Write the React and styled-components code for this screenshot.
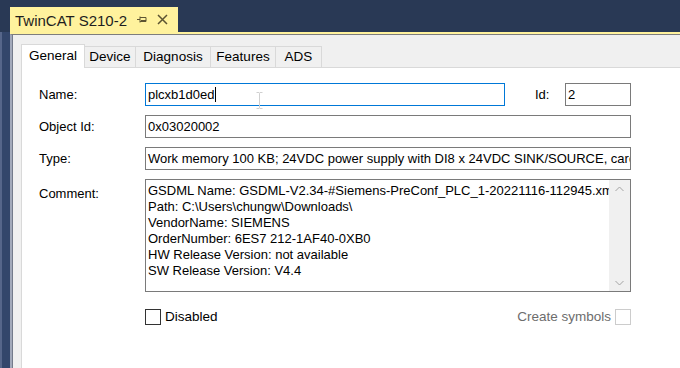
import React from "react";
import styled, { createGlobalStyle } from "styled-components";

const GlobalStyle = createGlobalStyle`
  html, body { margin: 0; padding: 0; }
  body {
    background: #293955;
    font-family: "Liberation Sans", Arial, sans-serif;
    font-size: 13px;
    color: #000;
  }
  * { box-sizing: border-box; }
`;

const Root = styled.div`
  width: 680px;
  height: 368px;
  overflow: hidden;
  display: flex;
  background: #293955;
`;

const LeftRail = styled.div`
  flex: none;
  width: 10px;
  background: linear-gradient(to right, #56668a 0 2px, #33466b 2px 10px);
  margin-top: 32px;
`;

const Main = styled.div`
  flex: 1;
  display: flex;
  flex-direction: column;
  min-width: 0;
`;

const DocTabRow = styled.div`
  height: 32px;
  flex: none;
  display: flex;
  align-items: flex-end;
`;

const DocTab = styled.div`
  width: 168px;
  height: 25px;
  background: #fff29d;
  display: flex;
  align-items: center;
  padding-left: 5px;
  color: #1e1e1e;
  font-size: 15px;
`;

const DocTitle = styled.span`
  flex: 1;
  white-space: nowrap;
  padding-top: 1px;
`;

const IconBtn = styled.span`
  width: 20px;
  height: 16px;
  display: flex;
  align-items: center;
  justify-content: center;
  margin-right: ${(p) => p.$mr ?? 0}px;
`;

const YellowLine = styled.div`
  height: 2px;
  flex: none;
  background: #fff29d;
`;

const DocBody = styled.div`
  flex: 1;
  display: flex;
  flex-direction: column;
  background: #f0f0f0;
  border-top: 1px solid #7d7d7d;
  border-left: 2px solid #a3aabb;
  box-shadow: inset 1px 0 0 #747b8b;
  padding: 9px 0 0 9px;
`;

const TabStrip = styled.div`
  display: flex;
  align-items: flex-end;
  height: 23px;
  flex: none;
  position: relative;
  z-index: 1;
`;

const Tab = styled.div`
  width: ${(p) => p.$w}px;
  height: ${(p) => (p.$active ? 24 : 21)}px;
  margin-bottom: ${(p) => (p.$active ? -1 : 0)}px;
  background: ${(p) => (p.$active ? "#fff" : "#f0f0f0")};
  border-top: 1px solid #d9d9d9;
  border-right: 1px solid #d9d9d9;
  border-left: ${(p) => (p.$first ? "1px solid #d9d9d9" : "none")};
  display: flex;
  justify-content: center;
  padding-top: ${(p) => (p.$active ? 3 : 2)}px;
  line-height: 15px;
  font-size: 13.5px;
  white-space: nowrap;
`;

const Page = styled.div`
  flex: 1;
  background: #fff;
  border-top: 1px solid #d9d9d9;
  border-left: 1px solid #d9d9d9;
  padding: 15px 0 0 17px;
  display: flex;
  flex-direction: column;
  position: relative;
`;

const Row = styled.div`
  display: flex;
  align-items: ${(p) => (p.$top ? "flex-start" : "center")};
  margin-bottom: ${(p) => p.$mb ?? 9}px;
`;

const Label = styled.div`
  width: ${(p) => p.$w ?? 106}px;
  flex: none;
  line-height: 16px;
  padding-top: ${(p) => p.$pt ?? 0}px;
  margin-left: ${(p) => p.$ml ?? 0}px;
  white-space: nowrap;
`;

const TextBox = styled.div`
  width: ${(p) => p.$w}px;
  height: 23px;
  flex: none;
  border: 1px solid ${(p) => (p.$focus ? "#0078d7" : "#7a7a7a")};
  padding: 0 2px;
  line-height: 21px;
  white-space: nowrap;
  overflow: hidden;
  background: #fff;
`;

const Caret = styled.span`
  display: inline-block;
  width: 1px;
  height: 15px;
  background: #000;
  vertical-align: -3px;
`;

const TextArea = styled.div`
  width: 486px;
  height: 113px;
  flex: none;
  border: 1px solid #7a7a7a;
  display: flex;
  background: #fff;
`;

const TextAreaContent = styled.div`
  flex: 1;
  min-width: 0;
  overflow: hidden;
  padding: 3px 0 0 2px;
  line-height: 16px;
  white-space: pre;
`;

const ScrollBar = styled.div`
  width: 21px;
  flex: none;
  background: #f0f0f0;
  display: flex;
  flex-direction: column;
  justify-content: space-between;
  align-items: center;
  padding: 6px 0 5px;
`;

const CheckRow = styled.div`
  display: flex;
  align-items: center;
  width: 486px;
  margin-left: 106px;
`;

const CheckBox = styled.span`
  width: 16px;
  height: 16px;
  flex: none;
  border: 1px solid ${(p) => (p.$disabled ? "#cccccc" : "#333333")};
  background: #fff;
`;

const CheckLabel = styled.span`
  color: ${(p) => (p.$disabled ? "#6d6d6d" : "#000")};
  margin: ${(p) => (p.$left ? "0 4px 0 0" : "0 0 0 4px")};
  line-height: 16px;
  font-size: 13.5px;
`;

const Spacer = styled.div`
  flex: 1;
`;

const Cursor = styled.svg`
  position: absolute;
  left: 234px;
  top: 24px;
`;

const tabs = [
  { t: "General", w: 64, active: true },
  { t: "Device", w: 51 },
  { t: "Diagnosis", w: 75 },
  { t: "Features", w: 65 },
  { t: "ADS", w: 46 },
];

const comment = [
  "GSDML Name: GSDML-V2.34-#Siemens-PreConf_PLC_1-20221116-112945.xml",
  "Path: C:\\Users\\chungw\\Downloads\\",
  "VendorName: SIEMENS",
  "OrderNumber: 6ES7 212-1AF40-0XB0",
  "HW Release Version: not available",
  "SW Release Version: V4.4",
];

export default function App() {
  return (
    <Root>
      <GlobalStyle />
      <LeftRail />
      <Main>
        <DocTabRow>
          <DocTab>
            <DocTitle>TwinCAT S210-2</DocTitle>
            <IconBtn>
              <svg width="11" height="11" viewBox="0 0 11 11">
                <path d="M0 5.5h3M3 2.5v6M3 3.5h6v4H3M4 6.5h5" stroke="#5c5432" strokeWidth="1" fill="none" />
              </svg>
            </IconBtn>
            <IconBtn $mr={6}>
              <svg width="11" height="11" viewBox="0 0 11 11">
                <path d="M1 1L10 10M10 1L1 10" stroke="#5c5432" strokeWidth="1.5" fill="none" />
              </svg>
            </IconBtn>
          </DocTab>
        </DocTabRow>
        <YellowLine />
        <DocBody>
          <TabStrip>
            {tabs.map((tb, i) => (
              <Tab key={tb.t} $w={tb.w} $active={tb.active} $first={i === 0}>
                {tb.t}
              </Tab>
            ))}
          </TabStrip>
          <Page>
            <Row>
              <Label>Name:</Label>
              <TextBox $w={360} $focus>
                plcxb1d0ed<Caret />
              </TextBox>
              <Label $w={30} $ml={30}>Id:</Label>
              <TextBox $w={66}>2</TextBox>
            </Row>
            <Row>
              <Label>Object Id:</Label>
              <TextBox $w={486}>0x03020002</TextBox>
            </Row>
            <Row>
              <Label>Type:</Label>
              <TextBox $w={486}>
                Work memory 100 KB; 24VDC power supply with DI8 x 24VDC SINK/SOURCE, card slot
              </TextBox>
            </Row>
            <Row $top $mb={17}>
              <Label $pt={7}>Comment:</Label>
              <TextArea>
                <TextAreaContent>{comment.join("\n")}</TextAreaContent>
                <ScrollBar>
                  <svg width="9" height="6" viewBox="0 0 9 6">
                    <path d="M0.5 5L4.5 1L8.5 5" stroke="#a3a3a3" strokeWidth="1" fill="none" />
                  </svg>
                  <svg width="9" height="6" viewBox="0 0 9 6">
                    <path d="M0.5 1L4.5 5L8.5 1" stroke="#a3a3a3" strokeWidth="1" fill="none" />
                  </svg>
                </ScrollBar>
              </TextArea>
            </Row>
            <CheckRow>
              <CheckBox />
              <CheckLabel>Disabled</CheckLabel>
              <Spacer />
              <CheckLabel $disabled $left>Create symbols</CheckLabel>
              <CheckBox $disabled />
            </CheckRow>
            <Cursor width="7" height="17" viewBox="0 0 7 17">
              <path d="M0.5 0.5h2.5l0.5 1l0.5-1h2.5M3.5 1.5v14M0.5 16.5h2.5l0.5-1l0.5 1h2.5" stroke="#d0d0d0" strokeWidth="1" fill="none" />
            </Cursor>
          </Page>
        </DocBody>
      </Main>
    </Root>
  );
}
